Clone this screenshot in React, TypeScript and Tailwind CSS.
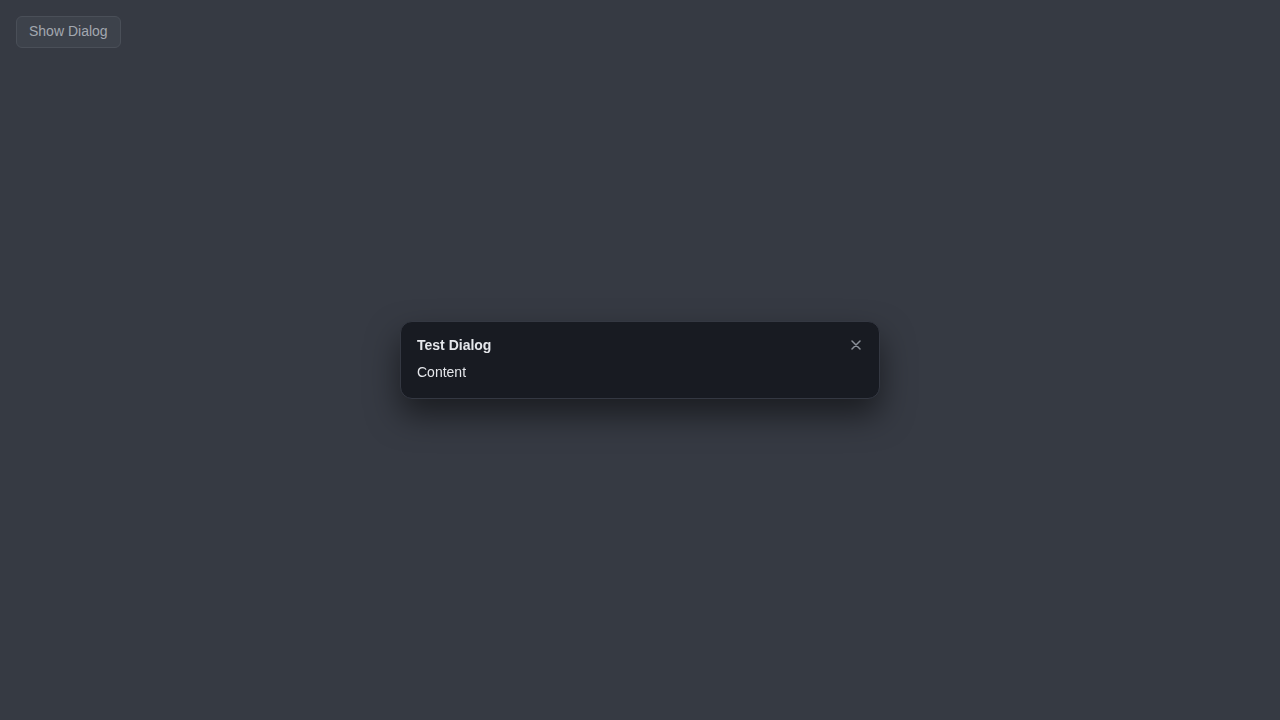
import { useState } from 'react';

export default function App() {
  const [open, setOpen] = useState(true);

  return (
    <div
      className="min-h-screen w-full bg-[#363a43] p-4"
      style={{ fontFamily: '"Liberation Sans", Arial, sans-serif' }}
    >
      {/* Trigger */}
      <button
        onClick={() => setOpen(true)}
        className="h-8 rounded-md border border-[#4a4f58] bg-[#3d424b] px-3 pb-0.5 text-sm text-[#a3a8b0]"
      >
        Show Dialog
      </button>

      {/* Dialog */}
      {open && (
        <div className="fixed inset-0 flex items-center justify-center">
          <div className="w-[480px] rounded-xl border border-[#343842] bg-[#181b22] px-4 pt-[13px] pb-4 shadow-[0_16px_32px_rgba(0,0,0,0.5)]">
            <div className="flex h-5 items-center justify-between">
              <h2 className="text-sm font-bold leading-5 text-[#e5e7eb]">Test Dialog</h2>
              <button
                onClick={() => setOpen(false)}
                className="mr-[2px] flex h-5 items-center text-[#8b9099]"
              >
                <svg className="h-[10px] w-[10px]" viewBox="0 0 10 10" fill="none" stroke="currentColor" strokeWidth={1.5} strokeLinecap="round">
                  <path d="M1 1l8 8M9 1L1 9" />
                </svg>
              </button>
            </div>
            <p className="mt-[7px] text-sm leading-5 text-[#e5e7eb]">Content</p>
          </div>
        </div>
      )}
    </div>
  );
}
